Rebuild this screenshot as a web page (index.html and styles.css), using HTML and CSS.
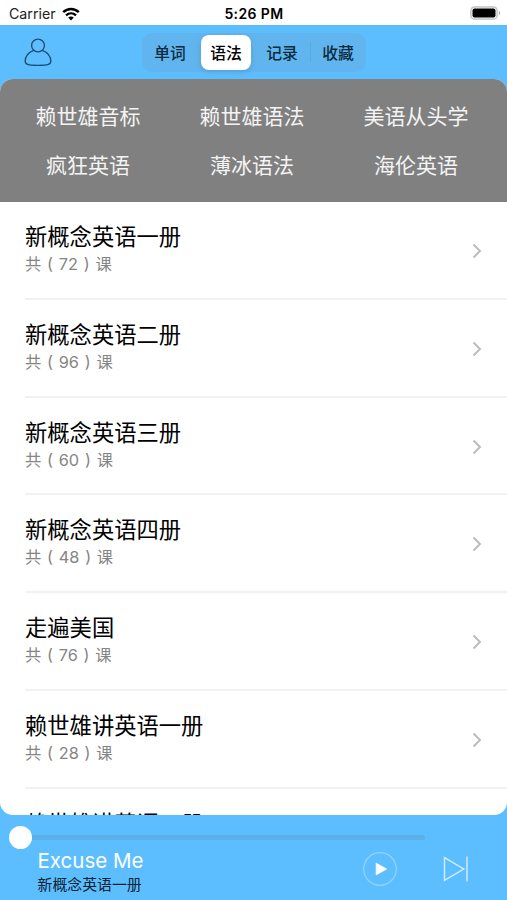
FILE: index.html
```html
<!DOCTYPE html>
<html lang="zh-CN">
<head>
    <meta charset="UTF-8">
    <meta name="viewport" content="width=device-width, initial-scale=1.0">
    <title>语法</title>
    <link rel="stylesheet" href="styles.css">
</head>
<body>
    <div class="app">
        <div class="status-bar">
            <div class="carrier">
                <span>Carrier</span>
                <svg class="wifi" width="18" height="14" viewBox="0 0 18 14">
                    <path d="M1.2 5.2C5.7 .9 12.3 .9 16.8 5.2" fill="none" stroke="#000" stroke-width="2.5"/>
                    <path d="M4 8.3C6.9 5.6 11.1 5.6 14 8.3" fill="none" stroke="#000" stroke-width="2.3"/>
                    <path d="M6.2 10.5C7.9 9 10.1 9 11.8 10.5L9 13.4Z" fill="#000"/>
                </svg>
            </div>
            <div class="time">5:26 PM</div>
            <svg class="battery" width="31" height="14" viewBox="0 0 31 14">
                <rect x=".9" y=".9" width="26.2" height="12.2" rx="3.6" fill="#fff" stroke="#c4c4c4" stroke-width="1.5"/>
                <rect x="2.5" y="2.4" width="23" height="9.2" rx="2" fill="#000"/>
                <path d="M28.8 4.8Q30.3 5.5 30.3 7T28.8 9.2Z" fill="#b5b5b5"/>
            </svg>
        </div>

        <header class="header">
            <svg class="user" width="28" height="29" viewBox="0 0 28 29">
                <g fill="none" stroke="#1d4a70" stroke-width="1.3">
                    <circle cx="14" cy="7.5" r="6.4"/>
                    <path d="M9.7 12.4C4.3 14.6 1.2 18.6 1.2 23.2C1.2 26.2 3.4 27.3 14 27.3S26.8 26.2 26.8 23.2C26.8 18.6 23.7 14.6 18.3 12.4"/>
                </g>
            </svg>
            <nav class="tabs">
                <a class="tab">单词</a>
                <a class="tab active">语法</a>
                <a class="tab">记录</a>
                <a class="tab divided">收藏</a>
            </nav>
        </header>

        <main class="content">
            <div class="category">
                <span>赖世雄音标</span>
                <span>赖世雄语法</span>
                <span>美语从头学</span>
                <span>疯狂英语</span>
                <span>薄冰语法</span>
                <span>海伦英语</span>
            </div>

            <div class="list">
                <div class="item">
                    <div>
                        <div class="name">新概念英语一册</div>
                        <div class="count">共 ( 72 ) 课</div>
                    </div>
                    <svg class="arrow" width="10" height="16" viewBox="0 0 10 16"><path d="M1.5 1.5L8 8L1.5 14.5"/></svg>
                </div>
                <div class="item">
                    <div>
                        <div class="name">新概念英语二册</div>
                        <div class="count">共 ( 96 ) 课</div>
                    </div>
                    <svg class="arrow" width="10" height="16" viewBox="0 0 10 16"><path d="M1.5 1.5L8 8L1.5 14.5"/></svg>
                </div>
                <div class="item">
                    <div>
                        <div class="name">新概念英语三册</div>
                        <div class="count">共 ( 60 ) 课</div>
                    </div>
                    <svg class="arrow" width="10" height="16" viewBox="0 0 10 16"><path d="M1.5 1.5L8 8L1.5 14.5"/></svg>
                </div>
                <div class="item">
                    <div>
                        <div class="name">新概念英语四册</div>
                        <div class="count">共 ( 48 ) 课</div>
                    </div>
                    <svg class="arrow" width="10" height="16" viewBox="0 0 10 16"><path d="M1.5 1.5L8 8L1.5 14.5"/></svg>
                </div>
                <div class="item">
                    <div>
                        <div class="name">走遍美国</div>
                        <div class="count">共 ( 76 ) 课</div>
                    </div>
                    <svg class="arrow" width="10" height="16" viewBox="0 0 10 16"><path d="M1.5 1.5L8 8L1.5 14.5"/></svg>
                </div>
                <div class="item">
                    <div>
                        <div class="name">赖世雄讲英语一册</div>
                        <div class="count">共 ( 28 ) 课</div>
                    </div>
                    <svg class="arrow" width="10" height="16" viewBox="0 0 10 16"><path d="M1.5 1.5L8 8L1.5 14.5"/></svg>
                </div>
                <div class="item">
                    <div>
                        <div class="name">赖世雄讲英语二册</div>
                    </div>
                </div>
            </div>
        </main>

        <footer class="player">
            <div class="progress">
                <div class="thumb"></div>
                <div class="track"></div>
            </div>
            <div class="controls">
                <div class="track-info">
                    <div class="song">Excuse Me</div>
                    <div class="album">新概念英语一册</div>
                </div>
                <svg class="play" width="34" height="34" viewBox="0 0 34 34">
                    <circle cx="17" cy="17" r="16.3" fill="none" stroke="#93d3ff" stroke-width="1.2"/>
                    <path d="M13.2 11.2L23.6 17L13.2 22.8Z" fill="#fff" stroke="#fff" stroke-width=".8" stroke-linejoin="round"/>
                </svg>
                <svg class="next" width="26" height="26" viewBox="0 0 26 26">
                    <path d="M1.5 1.7L20.8 13L1.5 24.3ZM24 .5V25.5" fill="none" stroke="#d4eeff" stroke-width="1.4"/>
                </svg>
            </div>
        </footer>
    </div>
</body>
</html>
```

FILE: styles.css
```css
* {
    box-sizing: border-box;
}
body {
    margin: 0;
    font-family: Inter, "Noto Sans CJK SC", sans-serif;
    color: #000;
}
svg {
    display: block;
    flex-shrink: 0;
}
.app {
    display: flex;
    flex-direction: column;
    height: 900px;
    background-color: #5dbeff;
    overflow: hidden;
}
.status-bar {
    display: grid;
    grid-template-columns: 1fr auto 1fr;
    align-items: center;
    height: 25px;
    padding: 2px 6px 0 9px;
    background-color: #fff;
    font-size: 14.2px;
    line-height: 20px;
}
.carrier {
    display: flex;
    align-items: center;
    gap: 6px;
    color: #222;
}
.time {
    margin-right: 2px;
    font-weight: 600;
    font-size: 14px;
    letter-spacing: 0.4px;
}
.battery {
    justify-self: end;
    margin-top: -2px;
}
.header {
    display: flex;
    align-items: center;
    height: 54px;
    padding-left: 24px;
}
.tabs {
    display: grid;
    grid-template-columns: repeat(4, 56px);
    margin-left: 90px;
    height: 39px;
    border-radius: 10px;
    background-color: #61b5ee;
}
.tab {
    display: flex;
    align-items: center;
    justify-content: center;
    font-size: 15.8px;
    font-weight: 500;
    color: #0c2a40;
}
.tab.active {
    margin: 2px 3px;
    background-color: #fff;
    border-radius: 8px;
    color: #000;
    box-shadow: 0 2px 6px rgba(0, 0, 0, 0.12);
}
.tab.divided {
    background: linear-gradient(#5aabe3, #5aabe3) left center / 1px 20px no-repeat;
}
.content {
    height: 736px;
    border-radius: 13px;
    background-color: #fff;
    overflow: hidden;
}
.category {
    display: grid;
    grid-template-columns: repeat(3, 1fr);
    grid-auto-rows: 49px;
    height: 123.4px;
    padding: 13px 9px 0 6px;
    background-color: #808080;
    color: #f4f4f4;
    font-size: 21px;
    line-height: 49px;
    text-align: center;
}
.item {
    display: flex;
    justify-content: space-between;
    height: 97.7px;
    margin-left: 25px;
    padding: 20px 25px 0 0;
    border-bottom: 2px solid #f1f1f1;
}
.name {
    font-size: 22.3px;
    line-height: 29px;
}
.count {
    font-size: 16.3px;
    line-height: 26px;
    color: #858585;
    word-spacing: 1.2px;
}
.arrow {
    margin-top: 21px;
    fill: none;
    stroke: #bcbcbc;
    stroke-width: 2;
}
.player {
    flex: 1;
    padding-top: 11px;
}
.progress {
    display: flex;
    align-items: center;
    padding-left: 9px;
}
.thumb {
    width: 23px;
    height: 23px;
    border-radius: 50%;
    background-color: #fff;
}
.track {
    width: 393px;
    height: 5px;
    border-radius: 0 3px 3px 0;
    background-color: #5cb0ea;
}
.controls {
    display: flex;
    padding-left: 37.5px;
}
.track-info {
    width: 325px;
}
.song {
    margin-top: -1px;
    font-size: 20.5px;
    line-height: 25px;
    color: #fff;
}
.album {
    font-size: 14.9px;
    line-height: 25px;
    color: #0c2233;
}
.play {
    margin-top: 3px;
}
.next {
    margin: 7px 0 0 46px;
}
```
